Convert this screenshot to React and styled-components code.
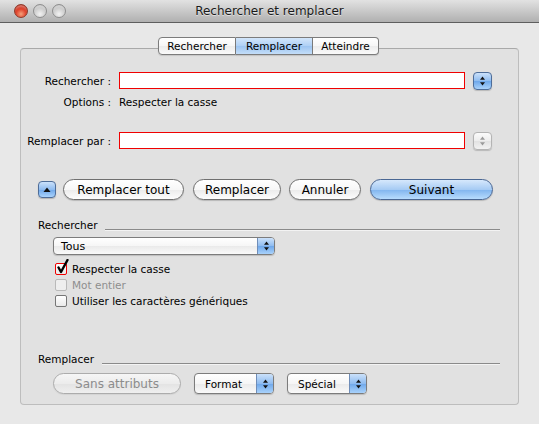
import React from 'react'
import styled, { createGlobalStyle } from 'styled-components'

const GlobalStyle = createGlobalStyle`
  html, body {
    margin: 0;
    padding: 0;
    background: #e8e8e8;
  }
  body {
    font-family: 'DejaVu Sans', 'Noto Sans', sans-serif;
    font-size: 10.5px;
    color: #000;
  }
`

const Window = styled.div`
  width: 539px;
  height: 424px;
  background: #e8e8e8;
  overflow: hidden;
`

const TitleBar = styled.div`
  position: relative;
  height: 22px;
  background: linear-gradient(#e2e2e2, #b0b0b0);
  border-bottom: 1px solid #5e5e5e;
  display: flex;
  align-items: center;
  justify-content: center;
`

const Title = styled.div`
  font-size: 12px;
  color: #1a1a1a;
  text-shadow: 0 1px 0 rgba(255, 255, 255, 0.5);
`

const Lights = styled.div`
  position: absolute;
  left: 14px;
  top: 4px;
  display: flex;
  gap: 5px;
`

const Light = styled.span`
  width: 14px;
  height: 14px;
  border-radius: 50%;
  box-sizing: border-box;
  border: 1px solid ${(p) => (p.$red ? '#8c3a2a' : '#8e8e8e')};
  background: ${(p) =>
    p.$red
      ? 'radial-gradient(circle at 50% 75%, #f4a07a 0%, #e0452e 45%, #b21f10 100%)'
      : 'radial-gradient(circle at 50% 75%, #f2f2f2 0%, #cfcfcf 50%, #a9a9a9 100%)'};
  box-shadow: inset 0 3px 2px -1px rgba(255, 255, 255, 0.35);
`

const Body = styled.div`
  padding-top: 14px;
`

const TabBar = styled.div`
  position: relative;
  z-index: 1;
  display: flex;
  justify-content: center;
  margin-bottom: -7px;
  padding-right: 2px;
`

const Tab = styled.div`
  width: ${(p) => p.$w}px;
  height: 18px;
  box-sizing: border-box;
  display: flex;
  align-items: center;
  justify-content: center;
  border: 1px solid #7c7c7c;
  border-left: ${(p) => (p.$first ? '1px solid #7c7c7c' : 'none')};
  border-radius: ${(p) => (p.$first ? '4px 0 0 4px' : p.$last ? '0 4px 4px 0' : '0')};
  background: ${(p) =>
    p.$active
      ? 'linear-gradient(#d3e6fb, #afd0f5 50%, #9cc4f1 51%, #c4def9)'
      : 'linear-gradient(#ffffff, #f6f6f6 50%, #ececec 51%, #fafafa)'};
  box-shadow: 0 1px 1px rgba(0, 0, 0, 0.12);
`

const Panel = styled.div`
  margin: 0 20px;
  height: 357px;
  box-sizing: border-box;
  background: #e1e1e1;
  border: 1px solid #bdbdbd;
  border-top-color: #a9a9a9;
  border-radius: 4px;
  padding-top: 22px;
  display: flex;
  flex-direction: column;
`

const FieldRow = styled.div`
  display: flex;
  align-items: center;
  height: ${(p) => p.$h}px;
  margin-top: ${(p) => p.$mt || 0}px;
`

const Label = styled.div`
  width: 90px;
  text-align: right;
  margin-right: 8px;
  white-space: nowrap;
`

const TextInput = styled.div`
  width: 346px;
  height: 17px;
  box-sizing: border-box;
  background: #fff;
  border: 1px solid #f00000;
`

const Stepper = styled.div`
  width: 19px;
  height: 18px;
  margin-left: 8px;
  box-sizing: border-box;
  border-radius: 4px;
  display: flex;
  align-items: center;
  justify-content: center;
  border: 1px solid ${(p) => (p.$disabled ? '#b4b4b4' : '#4e6d99')};
  background: ${(p) =>
    p.$disabled
      ? 'linear-gradient(#fbfbfb, #ededed 50%, #e2e2e2 51%, #f2f2f2)'
      : 'linear-gradient(#cbe1fa, #8fbcf0 50%, #6ea7ea 51%, #a9d2fb)'};
  box-shadow: 0 1px 1px rgba(0, 0, 0, 0.18);
`

const ButtonRow = styled.div`
  display: flex;
  align-items: center;
  height: 21px;
  margin-top: 29px;
  padding-left: 17px;
`

const Disclosure = styled.div`
  width: 18px;
  height: 17px;
  margin-right: 7px;
  box-sizing: border-box;
  border-radius: 4px;
  border: 1px solid #4e6d99;
  background: linear-gradient(#cbe1fa, #8fbcf0 50%, #6ea7ea 51%, #a9d2fb);
  box-shadow: 0 1px 1px rgba(0, 0, 0, 0.2);
  display: flex;
  align-items: center;
  justify-content: center;
`

const Pill = styled.div`
  width: ${(p) => p.$w}px;
  height: 21px;
  margin-right: ${(p) => p.$mr || 0}px;
  box-sizing: border-box;
  border-radius: 11px;
  display: flex;
  align-items: center;
  justify-content: center;
  font-size: 12px;
  white-space: nowrap;
  color: ${(p) => (p.$disabled ? '#8c8c8c' : '#000')};
  border: 1px solid
    ${(p) => (p.$primary ? '#4a6793' : p.$disabled ? '#acacac' : '#6f6f6f')};
  background: ${(p) =>
    p.$primary
      ? 'linear-gradient(#d6e8fc, #a6cbf4 50%, #80b4ee 51%, #b8dcfd)'
      : p.$disabled
      ? 'linear-gradient(#f6f6f6, #ececec 50%, #e3e3e3 51%, #efefef)'
      : 'linear-gradient(#ffffff, #f7f7f7 50%, #ebebeb 51%, #fdfdfd)'};
  box-shadow: 0 1px 1px rgba(0, 0, 0, ${(p) => (p.$disabled ? 0.06 : 0.18)});
`

const SectionHead = styled.div`
  display: flex;
  align-items: center;
  height: 14px;
  margin-top: ${(p) => p.$mt}px;
  padding-left: 17px;
  padding-right: 18px;
`

const SectionLine = styled.div`
  flex: 1;
  height: 1px;
  margin-left: 8px;
  margin-top: 8px;
  background: #8a8a8a;
  box-shadow: 0 1px 0 rgba(255, 255, 255, 0.6);
`

const Popup = styled.div`
  width: ${(p) => p.$w}px;
  height: ${(p) => p.$h}px;
  margin-right: ${(p) => p.$mr || 0}px;
  box-sizing: border-box;
  border: 1px solid #7c7c7c;
  border-radius: 4px;
  display: flex;
  overflow: hidden;
  background: linear-gradient(#ffffff, #f6f6f6 50%, #eaeaea 51%, #fafafa);
  box-shadow: 0 1px 1px rgba(0, 0, 0, 0.16);
`

const PopupText = styled.div`
  flex: 1;
  display: flex;
  align-items: center;
  padding-left: ${(p) => p.$pl || 10}px;
  font-size: ${(p) => p.$fs || 10.5}px;
`

const PopupArrows = styled.div`
  width: 16px;
  border-left: 1px solid #6f8db8;
  background: linear-gradient(#cbe1fa, #8fbcf0 50%, #6ea7ea 51%, #a9d2fb);
  display: flex;
  align-items: center;
  justify-content: center;
`

const TousRow = styled.div`
  margin-top: 5px;
  padding-left: 32px;
  display: flex;
`

const Checks = styled.div`
  margin-top: 6px;
  padding-left: 34px;
  display: flex;
  flex-direction: column;
`

const CheckRow = styled.div`
  height: 16px;
  display: flex;
  align-items: center;
  color: ${(p) => (p.$disabled ? '#8e8e8e' : '#000')};
`

const Box = styled.span`
  position: relative;
  width: 12px;
  height: 12px;
  margin-right: 5px;
  box-sizing: border-box;
  border-radius: 2px;
  border: 1px solid ${(p) => (p.$focus ? '#f00000' : p.$disabled ? '#b9b9b9' : '#767676')};
  background: ${(p) => (p.$disabled ? '#eeeeee' : 'linear-gradient(#ffffff, #e9e9e9)')};
`

const Tick = styled.svg`
  position: absolute;
  left: 0px;
  top: -5px;
`

const BottomRow = styled.div`
  margin-top: 7px;
  padding-left: 32px;
  display: flex;
  align-items: center;
`

const UpDown = ({ color = '#111' }) => (
  <svg width="7" height="10" viewBox="0 0 7 10">
    <path d="M3.5 0.5 L6 3.8 L1 3.8 Z" fill={color} />
    <path d="M3.5 9.5 L6 6.2 L1 6.2 Z" fill={color} />
  </svg>
)

export default function App() {
  return (
    <Window>
      <GlobalStyle />
      <TitleBar>
        <Lights>
          <Light $red />
          <Light />
          <Light />
        </Lights>
        <Title>Rechercher et remplacer</Title>
      </TitleBar>
      <Body>
        <TabBar>
          <Tab $w={78} $first>Rechercher</Tab>
          <Tab $w={77} $active>Remplacer</Tab>
          <Tab $w={66} $last>Atteindre</Tab>
        </TabBar>
        <Panel>
          <FieldRow $h={19}>
            <Label>Rechercher :</Label>
            <TextInput />
            <Stepper>
              <UpDown />
            </Stepper>
          </FieldRow>
          <FieldRow $h={16} $mt={4}>
            <Label>Options :</Label>
            <span>Respecter la casse</span>
          </FieldRow>
          <FieldRow $h={19} $mt={21}>
            <Label>Remplacer par :</Label>
            <TextInput />
            <Stepper $disabled>
              <UpDown color="#9a9a9a" />
            </Stepper>
          </FieldRow>

          <ButtonRow>
            <Disclosure>
              <svg width="8" height="6" viewBox="0 0 8 6">
                <path d="M4 0.5 L7.5 5 L0.5 5 Z" fill="#111" />
              </svg>
            </Disclosure>
            <Pill $w={121} $mr={9}>Remplacer tout</Pill>
            <Pill $w={88} $mr={8}>Remplacer</Pill>
            <Pill $w={72} $mr={9}>Annuler</Pill>
            <Pill $w={123} $primary>Suivant</Pill>
          </ButtonRow>

          <SectionHead $mt={18}>
            <span>Rechercher</span>
            <SectionLine />
          </SectionHead>
          <TousRow>
            <Popup $w={222} $h={18}>
              <PopupText $pl={7} $fs={11}>Tous</PopupText>
              <PopupArrows>
                <UpDown />
              </PopupArrows>
            </Popup>
          </TousRow>
          <Checks>
            <CheckRow>
              <Box $focus>
                <Tick width="14" height="16" viewBox="0 0 14 16">
                  <path d="M2.5 8.5 L5 13 L11.5 1" fill="none" stroke="#000" strokeWidth="2.4" strokeLinecap="round" strokeLinejoin="round" />
                </Tick>
              </Box>
              Respecter la casse
            </CheckRow>
            <CheckRow $disabled>
              <Box $disabled />
              Mot entier
            </CheckRow>
            <CheckRow>
              <Box />
              Utiliser les caractères génériques
            </CheckRow>
          </Checks>

          <SectionHead $mt={43}>
            <span>Remplacer</span>
            <SectionLine />
          </SectionHead>
          <BottomRow>
            <Pill $w={128} $mr={13} $disabled>Sans attributs</Pill>
            <Popup $w={80} $h={21} $mr={13}>
              <PopupText>Format</PopupText>
              <PopupArrows>
                <UpDown />
              </PopupArrows>
            </Popup>
            <Popup $w={80} $h={21}>
              <PopupText>Spécial</PopupText>
              <PopupArrows>
                <UpDown />
              </PopupArrows>
            </Popup>
          </BottomRow>
        </Panel>
      </Body>
    </Window>
  )
}
